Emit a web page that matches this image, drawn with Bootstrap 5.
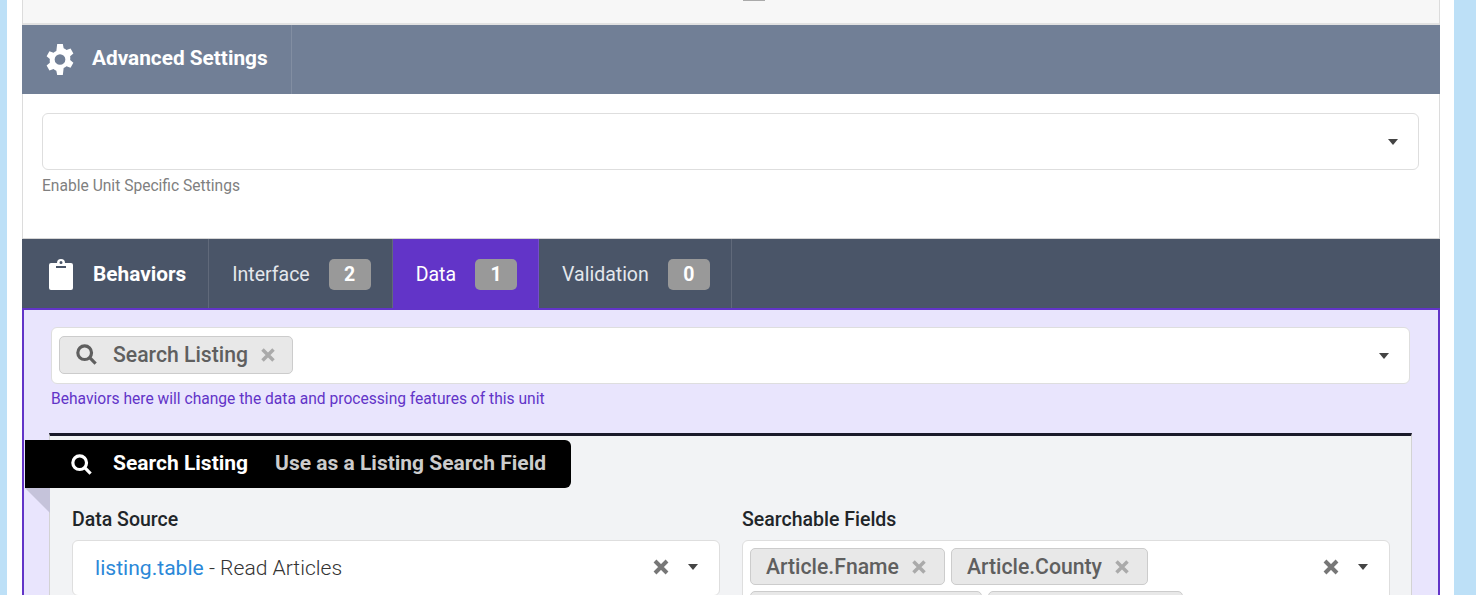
<!DOCTYPE html>
<html lang="en"><head><meta charset="utf-8"><title>Unit</title>
<link href="https://cdn.jsdelivr.net/npm/bootstrap@5.3.0/dist/css/bootstrap.min.css" rel="stylesheet">
<style>
html,body{height:595px;overflow:hidden;}
body{background:#bde0f7;font-family:Roboto,"Liberation Sans",sans-serif;color:#212529;}
.sheet{margin-left:7px;width:1447px;height:595px;background:#fff;padding-left:15px;overflow:hidden;}
.panel{width:1418px;border-left:1px solid #dcdcdc;border-right:1px solid #dcdcdc;}
.topstrip{height:25px;background:#f7f7f7;border-bottom:2px solid #e2e2e2;}
.topmark{width:22px;height:1px;background:#aaa;margin-left:720px;}
.bar{display:flex;margin:0 -1px;color:#fff;}
.bar-adv{background:#717f96;height:69px;}
.bar-beh{background:#4a5568;border-top:1px solid #d5d5d5;height:70px;}
.cell{display:flex;align-items:center;border-right:1px solid rgba(255,255,255,.12);font-size:19.5px;}
.bar-beh .cell{padding-top:2px;}
.bar-adv .cell{padding-bottom:1px;}
.cell-head{font-weight:700;font-size:20.8px;padding-right:23px;}
.cell-gear{padding-left:23px;}
.cell-gear svg{margin-right:17px;}
.cell-clip{padding-left:27px;padding-right:22px;}
.cell-clip svg{margin-right:20px;}
.cell-tab{padding:0 21px 0 23px;color:#e4e7ec;}
.cell-tab.onn{background:#6234c8;color:#fff;}
.cnt{background:#999;color:#fff;font-weight:700;border-radius:5px;width:42px;height:31px;margin-left:19px;display:flex;align-items:center;justify-content:center;font-size:19.5px;}
.advbody{height:144px;padding:19px 20px 0 19px;}
.advbody .hint{margin-top:8px;color:#808080;}
.pick{background:#fff;border:1px solid #dedede;border-radius:6px;display:flex;align-items:center;height:57px;}
.caretdn{width:0;height:0;flex:none;border-left:5.5px solid transparent;border-right:5.5px solid transparent;border-top:6px solid #444;}
.pick .caretdn{margin-left:auto;margin-right:20px;}
.hint{font-size:15.6px;color:#777;margin-top:7px;line-height:17px;}
.behbody{background:#e9e5fd;border:2px solid #6234c8;margin:0 -1px;height:300px;padding:17px 28px 0 27px;position:relative;}
.hint-p{color:#6234c8;}
.chip{display:inline-flex;align-items:center;background:#e8e8e8;border:1px solid #ccc;border-radius:5px;font-weight:500;color:#5f5f5f;font-size:21.2px;height:37px;padding:0 18px 0 15px;white-space:nowrap;}
.chip-beh{height:38px;margin:0 0 2px 7px;padding:0 17px 0 16px;}
.chip .lens{margin-right:16px;}
.chip .xm{margin-left:13px;}
.chip-wide{min-width:232px;justify-content:space-between;}
.unitbox{background:#f2f3f5;border-top:3px solid #1a1a2a;border-left:1px solid #d3d3d3;border-right:1px solid #d3d3d3;margin:25px -2px 0 -2px;height:200px;padding:0 21px 0 22px;position:relative;}
.ribbon{position:absolute;left:-25px;top:4px;height:48px;width:546px;background:#000;border-radius:0 6px 6px 0;color:#fff;display:flex;align-items:center;font-weight:700;font-size:21px;padding-left:46px;}
.ribbon svg{margin-right:21px;}
.ribbon .sub{color:#ccc;margin-left:27px;}
.fold{position:absolute;left:-25px;top:52px;width:0;height:0;border-top:25px solid #c5c3da;border-left:25px solid transparent;}
.twocol{display:grid;grid-template-columns:648px 648px;gap:22px;padding-top:73px;}
.lab{font-weight:500;font-size:19.5px;line-height:22px;margin-bottom:9px;}
.sel{background:#fff;border:1px solid #dedede;border-radius:6px;min-height:56px;display:flex;padding:7px 21px 0 7px;}
.sel-text{font-size:21.1px;padding:4px 0 0 15px;flex-grow:1;color:#333;font-weight:300;}
.sel-text .src{color:#2b88d8;font-weight:400;}
.bigx{flex:none;margin:11px 19px 0 0;}
.sel .caretdn{margin-top:16px;}
.chips{display:flex;flex-wrap:wrap;gap:6px;flex-grow:1;width:560px;}
</style></head><body>
<div class="sheet"><div class="panel">
<div class="topstrip"><div class="topmark"></div></div>
<div class="bar bar-adv"><div class="cell cell-head cell-gear">
<svg width="30" height="31" viewBox="1.500 1 21 22" fill="#fff"><path fill-rule="evenodd" d="M10 1h4l.6 3a8.500 8.500 0 0 1 2 1.200l2.900-1 2 3.500-2.300 2a8.500 8.500 0 0 1 0 2.600l2.300 2-2 3.500-2.900-1a8.500 8.500 0 0 1-2 1.200L14 23h-4l-.6-3a8.500 8.500 0 0 1-2-1.200l-2.900 1-2-3.500 2.300-2a8.500 8.500 0 0 1 0-2.600l-2.300-2 2-3.500 2.900 1a8.500 8.500 0 0 1 2-1.200zM12 8.200a3.800 3.800 0 1 0 0 7.600 3.800 3.800 0 0 0 0-7.600z"/></svg>Advanced Settings</div></div>
<div class="advbody"><div class="pick"><span class="caretdn"></span></div><div class="hint">Enable Unit Specific Settings</div></div>
<div class="bar bar-beh">
<div class="cell cell-head cell-clip"><svg width="24" height="31" viewBox="0 1 24 31" fill="#fff"><path fill-rule="evenodd" d="M2 5h6a4 4 0 0 1 8 0h6a2 2 0 0 1 2 2v23a2 2 0 0 1-2 2H2a2 2 0 0 1-2-2V7a2 2 0 0 1 2-2zm10-2a1.500 1.500 0 1 0 0 3 1.500 1.500 0 0 0 0-3zM7 8v2h10V8z"/></svg>Behaviors</div>
<div class="cell cell-tab">Interface<span class="cnt">2</span></div>
<div class="cell cell-tab onn">Data<span class="cnt">1</span></div>
<div class="cell cell-tab">Validation<span class="cnt">0</span></div>
</div>
<div class="behbody">
<div class="pick"><span class="chip chip-beh"><svg class="lens" width="21" height="21" viewBox="0 0 23 23" fill="none" stroke="#5f5f5f" stroke-width="3.500"><circle cx="9.500" cy="9.500" r="7.500"/><path d="M15 15l6.500 6.500"/></svg>Search Listing<svg class="xm" width="14" height="14" viewBox="0 0 14 14" stroke="#aaa" stroke-width="3.500"><path d="M1.500 1.500l11 11M12.500 1.500l-11 11"/></svg></span><span class="caretdn"></span></div>
<div class="hint hint-p">Behaviors here will change the data and processing features of this unit</div>
<div class="unitbox">
<div class="fold"></div>
<div class="ribbon"><svg width="21" height="21" viewBox="0 0 23 23" fill="none" stroke="#fff" stroke-width="3.500"><circle cx="9.500" cy="9.500" r="7.500"/><path d="M15 15l6.500 6.500"/></svg>Search Listing<span class="sub">Use as a Listing Search Field</span></div>
<div class="twocol">
<div><div class="lab">Data Source</div><div class="sel"><div class="sel-text"><span class="src">listing.table</span> - Read Articles</div><svg class="bigx" width="16" height="16" viewBox="0 0 16 16" stroke="#777" stroke-width="4"><path d="M2 2l12 12M14 2L2 14"/></svg><span class="caretdn"></span></div></div>
<div><div class="lab">Searchable Fields</div><div class="sel"><div class="chips">
<span class="chip">Article.Fname<svg class="xm" width="14" height="14" viewBox="0 0 14 14" stroke="#aaa" stroke-width="3.500"><path d="M1.500 1.500l11 11M12.500 1.500l-11 11"/></svg></span>
<span class="chip">Article.County<svg class="xm" width="14" height="14" viewBox="0 0 14 14" stroke="#aaa" stroke-width="3.500"><path d="M1.500 1.500l11 11M12.500 1.500l-11 11"/></svg></span>
<span class="chip chip-wide">Article.Lastname<svg class="xm" width="14" height="14" viewBox="0 0 14 14" stroke="#aaa" stroke-width="3.500"><path d="M1.500 1.500l11 11M12.500 1.500l-11 11"/></svg></span>
<span class="chip">Article.Lname<svg class="xm" width="14" height="14" viewBox="0 0 14 14" stroke="#aaa" stroke-width="3.500"><path d="M1.500 1.500l11 11M12.500 1.500l-11 11"/></svg></span>
</div><svg class="bigx" width="16" height="16" viewBox="0 0 16 16" stroke="#777" stroke-width="4"><path d="M2 2l12 12M14 2L2 14"/></svg><span class="caretdn"></span></div></div>
</div></div></div>
</div></div>
<script src="https://cdn.jsdelivr.net/npm/bootstrap@5.3.0/dist/js/bootstrap.bundle.min.js"></script>
</body></html>
